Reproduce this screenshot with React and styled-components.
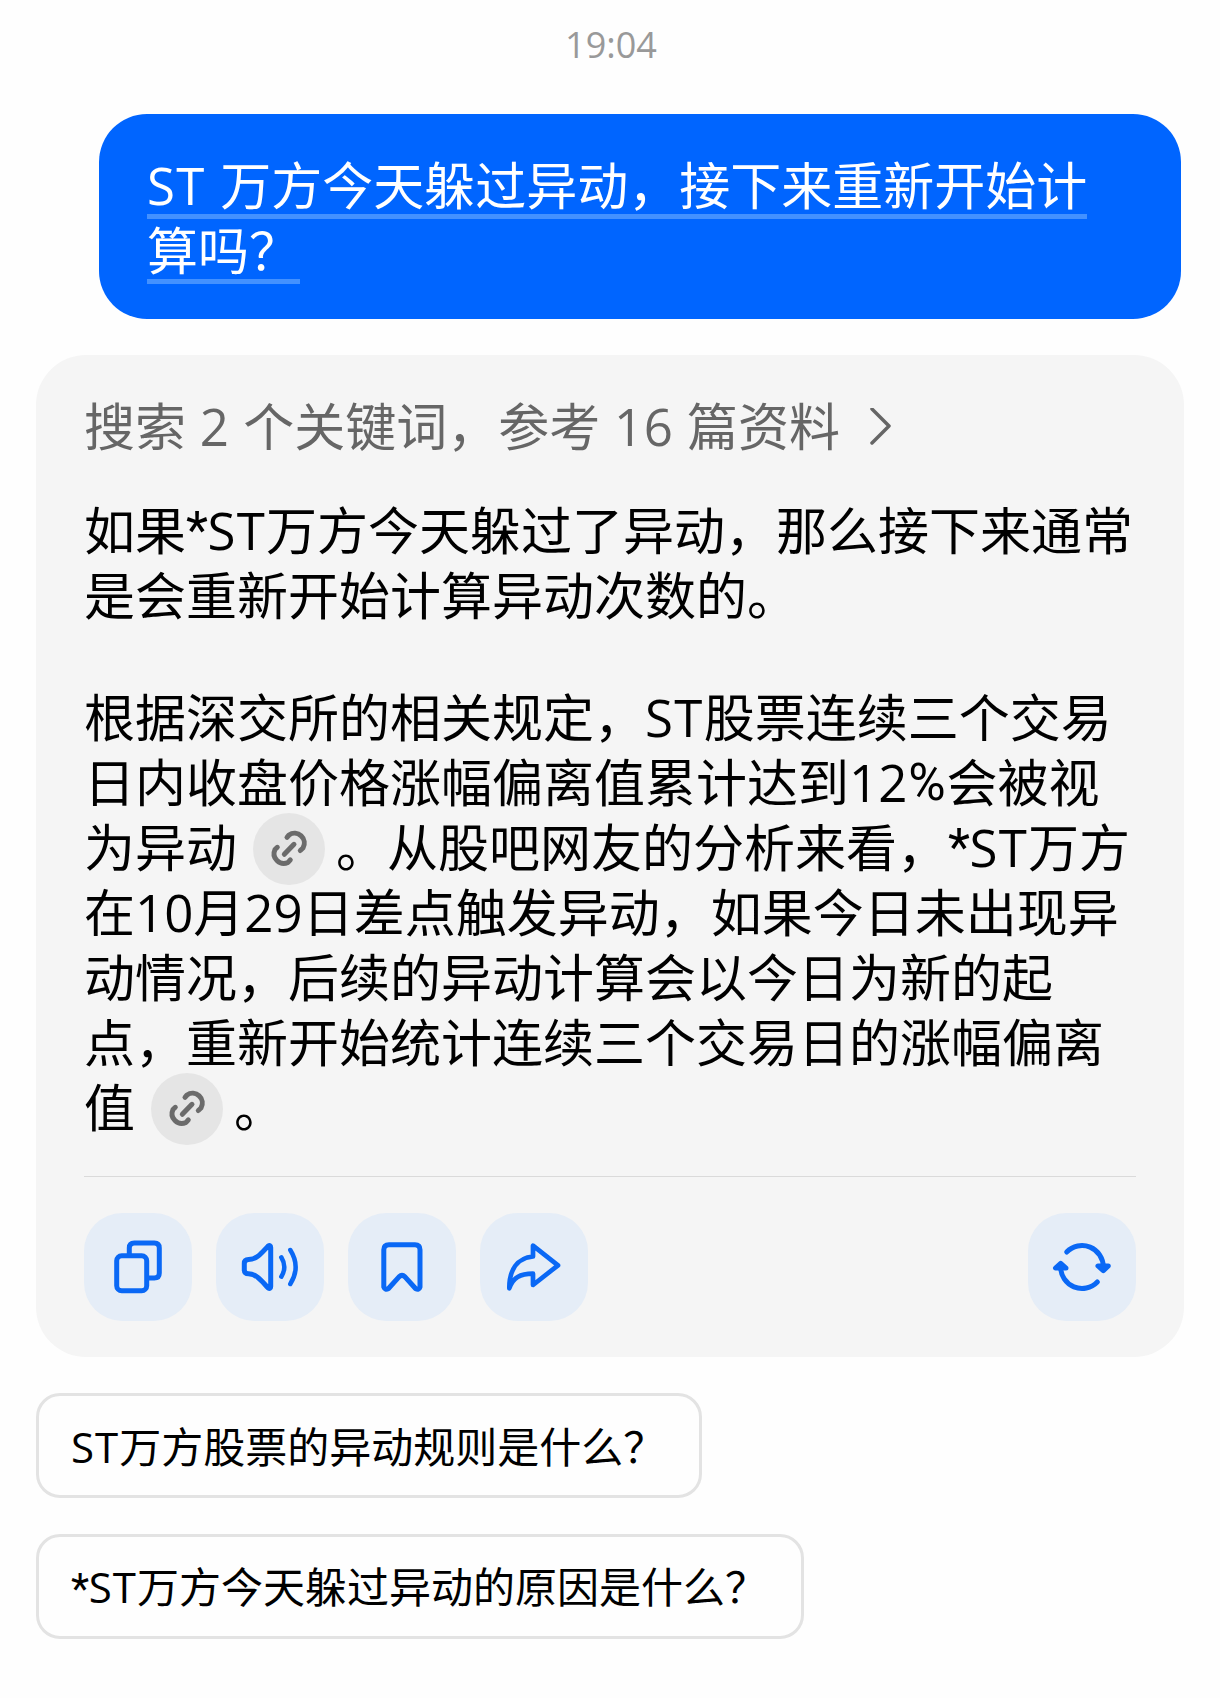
import React from 'react';

import styled, { createGlobalStyle } from 'styled-components';

const GlobalStyle = createGlobalStyle`
    * {
        box-sizing: border-box;
    }

    body {
        margin: 0;
        background: #fefefe;
        color: #000;
        font-family: 'Open Sans', 'Noto Sans CJK SC', sans-serif;
    }

    button {
        margin: 0;
        padding: 0;
        border: 0;
        background: none;
        color: inherit;
        font: inherit;
        text-align: left;
        cursor: pointer;
    }
`;

const Page = styled.main`
    display: flex;
    flex-direction: column;
    width: 1220px;
    min-height: 1698px;
    padding: 20px 36px 0;
`;

const Time = styled.time`
    height: 94px;
    padding-left: 2px;
    color: #999;
    font-size: 36px;
    line-height: 50px;
    text-align: center;
`;

const Question = styled.div`
    align-self: flex-end;
    width: 1082px;
    height: 205px;
    margin-right: 3px;
    padding: 39px 48px 0;
    border-radius: 48px;
    background: #0065ff;
    color: #fff;
    font-size: 51px;
    line-height: 65px;
`;

const Underlined = styled.span`
    display: block;
    width: fit-content;
    height: 66px;
    margin-bottom: -1px;
    white-space: nowrap;
    background: linear-gradient(#4391ff, #4391ff) 0 61px / 100% 5px no-repeat;
`;

const Answer = styled.section`
    height: 1002px;
    margin-top: 36px;
    padding: 39px 48px 36px;
    border-radius: 50px;
    background: #f5f5f5;
    font-size: 51px;
    line-height: 65px;
`;

const Sources = styled.button`
    display: flex;
    align-items: center;
    gap: 30px;
    height: 65px;
    margin-bottom: 39px;
    color: #666;
    line-height: 65px;
    white-space: nowrap;
`;

const Paragraph = styled.p`
    margin: 0 0 ${props => props.$last ? '36px' : '57px'};
`;

const Line = styled.span`
    display: flex;
    height: 65px;
    white-space: pre;
`;

const Latin = styled.span`
    letter-spacing: ${props => props.$tight ? '0.01em' : '0.025em'};
`;

const Sign = styled.span`
    display: inline-block;
    width: ${props => props.$width}em;
    font-family: Roboto, sans-serif;
    text-align: center;
`;

const Cite = styled.button`
    display: flex;
    flex: none;
    align-items: center;
    justify-content: center;
    width: 72px;
    height: 72px;
    margin: -2px 11px 0 16px;
    border-radius: 50%;
    background: #e5e5e5;
    color: #6b6b6b;
`;

const Actions = styled.div`
    display: flex;
    gap: 24px;
    padding-top: 36px;
    border-top: 1px solid #dadada;
`;

const Action = styled.button`
    display: flex;
    align-items: center;
    justify-content: center;
    width: 108px;
    height: 108px;
    border-radius: 38px;
    background: #e5edf7;
    color: #0a68f5;

    &:last-child {
        margin-left: auto;
    }
`;

const Suggestions = styled.div`
    display: flex;
    flex-direction: column;
    align-items: flex-start;
    gap: 36px;
    margin-top: 36px;
`;

const Suggestion = styled.button`
    height: 105px;
    padding: 1px 34px 0 32px;
    border: 3px solid #e3e3e3;
    border-radius: 24px;
    font-size: 42px;
    line-height: 57px;
    white-space: nowrap;
`;

const Icon = ({ size = 60, stroke = 5, children }) => (
    <svg
        width={size}
        height={size}
        viewBox={`0 0 ${size} ${size}`}
        fill="none"
        stroke="currentColor"
        strokeWidth={stroke}
        strokeLinecap="round"
        strokeLinejoin="round"
    >
        {children}
    </svg>
);

const CopyIcon = () => (
    <Icon>
        <rect x="8.7" y="18.7" width="30" height="35" rx="5" />
        <path d="M21.3 17V11Q21.3 6 26.3 6H46.3Q51.3 6 51.3 11V36Q51.3 41 46.3 41H41" />
    </Icon>
);

const SpeakerIcon = () => (
    <Icon>
        <path d="M4.3 26.500Q4.3 22.500 8.500 22.500C17 22.500 22 15.500 28 9.200Q30.700 7.500 30.700 10.500V49.500Q30.700 52.500 28 50.800C22 44.500 17 37 8.500 36.800Q4.3 36.800 4.3 33Z" />
        <path d="M41.300 20.300Q47.300 30 41.300 39.700" strokeWidth="4.500" />
        <path d="M50.300 13Q61 30 50.300 47" strokeWidth="4.500" />
    </Icon>
);

const BookmarkIcon = () => (
    <Icon>
        <path d="M17 7.700H43Q48 7.700 48 12.700V50Q47 53.500 43.500 51.500L33 39.800Q30 37 27 39.800L16.500 51.500Q13 53.500 11.800 50V12.700Q11.800 7.700 17 7.700Z" />
    </Icon>
);

const ShareIcon = () => (
    <Icon>
        <path d="M29 8.700V19.500C13 21 5.300 33 5.300 51.300C9 40.500 16 36.700 29 36.700V48L54 28.300Z" strokeWidth="4.700" />
    </Icon>
);

const RefreshIcon = () => (
    <Icon>
        <path d="M14.700 15A21.300 21.300 0 0 1 51.300 30" />
        <path d="M46 29H56.300L51.300 33.700Z" fill="currentColor" />
        <path d="M45.300 45A21.300 21.300 0 0 1 8.700 30" />
        <path d="M3.500 31H14L8.700 26.300Z" fill="currentColor" />
    </Icon>
);

const LinkIcon = () => (
    <Icon size={42}>
        <path d="M19 9.300L21 7A9.800 9.800 0 0 1 35 20L32.300 22.500" />
        <path d="M9.300 19.300L7 21.500A9.800 9.800 0 0 0 20 34.500L22.300 31.800" />
        <path d="M16.300 26.300L26 16.300" />
    </Icon>
);

const suggestions = [
    <><Latin>ST</Latin>万方股票的异动规则是什么？</>,
    <><Sign $width={0.42}>*</Sign><Latin>ST</Latin>万方今天躲过异动的原因是什么？</>
];

const App = () => (
    <>
        <GlobalStyle />
        <Page>
            <Time>19:04</Time>
            <Question>
                <Underlined><Latin>ST </Latin>万方今天躲过异动，接下来重新开始计</Underlined>
                <Underlined>算吗？</Underlined>
            </Question>
            <Answer>
                <Sources type="button">
                    <span>搜索<Latin $tight> 2 </Latin>个关键词，参考<Latin $tight> 16 </Latin>篇资料</span>
                    <svg width="22" height="38" viewBox="0 0 22 38" fill="none" stroke="currentColor" strokeWidth="3.5" strokeLinecap="round" strokeLinejoin="round">
                        <path d="M2 1L19 18L2 35" />
                    </svg>
                </Sources>
                <Paragraph>
                    <Line>如果<Sign $width={0.42}>*</Sign><Latin>ST</Latin>万方今天躲过了异动，那么接下来通常</Line>
                    <Line>是会重新开始计算异动次数的。</Line>
                </Paragraph>
                <Paragraph $last>
                    <Line>根据深交所的相关规定，<Latin>ST</Latin>股票连续三个交易</Line>
                    <Line>日内收盘价格涨幅偏离值累计达到12<Sign $width={0.77}>%</Sign>会被视</Line>
                    <Line>
                        为异动
                        <Cite type="button"><LinkIcon /></Cite>
                        。从股吧网友的分析来看，<Sign $width={0.42}>*</Sign><Latin>ST</Latin>万方
                    </Line>
                    <Line>在10月29日差点触发异动，如果今日未出现异</Line>
                    <Line>动情况，后续的异动计算会以今日为新的起</Line>
                    <Line>点，重新开始统计连续三个交易日的涨幅偏离</Line>
                    <Line>
                        值
                        <Cite type="button"><LinkIcon /></Cite>
                        。
                    </Line>
                </Paragraph>
                <Actions>
                    <Action type="button"><CopyIcon /></Action>
                    <Action type="button"><SpeakerIcon /></Action>
                    <Action type="button"><BookmarkIcon /></Action>
                    <Action type="button"><ShareIcon /></Action>
                    <Action type="button"><RefreshIcon /></Action>
                </Actions>
            </Answer>
            <Suggestions>
                {suggestions.map((suggestion, i) => (
                    <Suggestion type="button" key={i}>{suggestion}</Suggestion>
                ))}
            </Suggestions>
        </Page>
    </>
);

export default App;
